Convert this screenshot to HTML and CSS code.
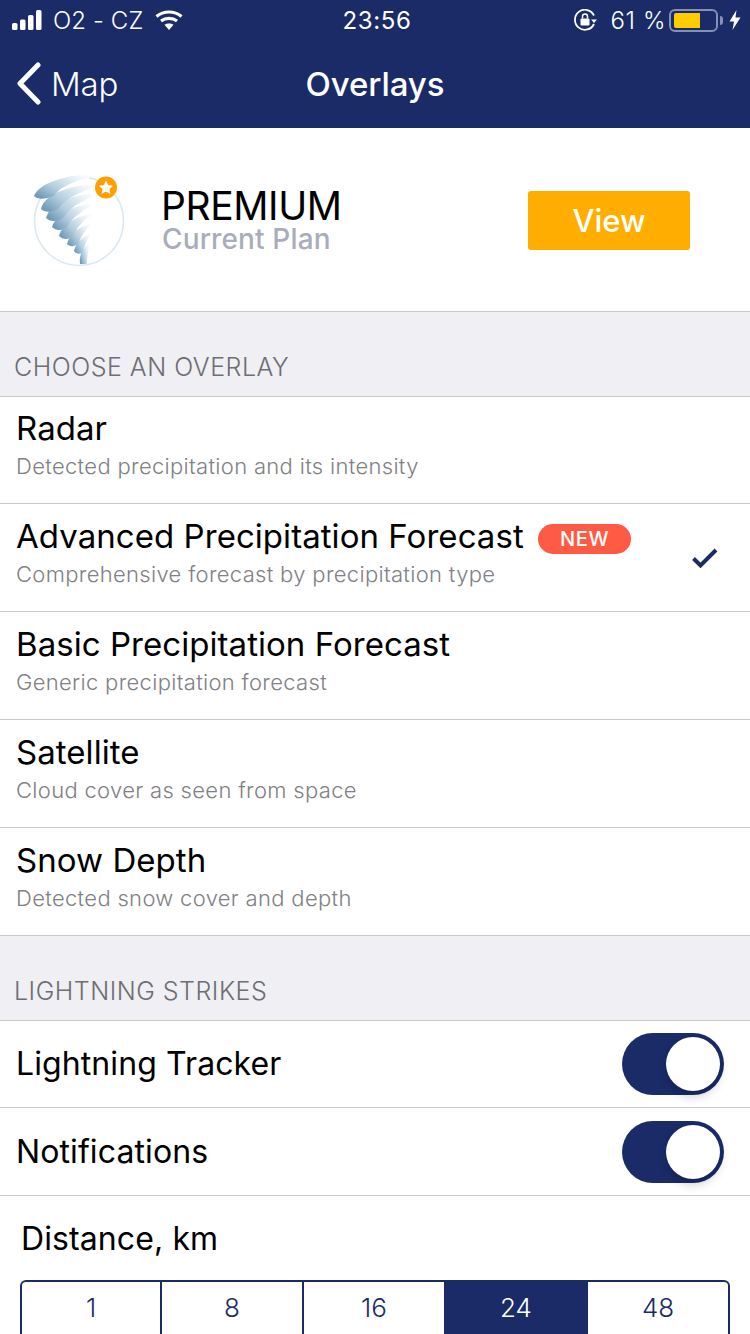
FILE: index.html
```html
<!DOCTYPE html>
<html lang="en">
<head>
<meta charset="utf-8">
<title>Overlays</title>
<link rel="stylesheet" href="styles.css">
</head>
<body>
<div class="app">
  <header class="header">
    <div class="status">
      <div class="status-left">
        <svg class="signal" width="34" height="20" viewBox="0 0 34 20"><g fill="#fff"><rect x="0" y="13" width="5.5" height="7" rx="1.5"/><rect x="8" y="9.500" width="5.500" height="10.500" rx="1.500"/><rect x="16" y="5" width="5.500" height="15" rx="1.500"/><rect x="24" y="0" width="5.500" height="20" rx="1.500"/></g></svg>
        <span class="carrier">O2 - CZ</span>
        <svg class="wifi" width="28" height="20" viewBox="0 0 28 20"><g fill="none" stroke="#fff" stroke-width="3.200"><path d="M1.500 6.500C8.500 0.500 19.500 0.500 26.500 6.500"/><path d="M6 11C10.500 7.500 17.500 7.500 22 11"/></g><path d="M9.500 14.800C12 13 16 13 18.500 14.800L14 20Z" fill="#fff"/></svg>
      </div>
      <span class="time">23:56</span>
      <div class="status-right">
        <svg class="lock" width="24" height="22" viewBox="0 0 24 22"><path d="M20 6.500A10 10 0 1 0 20 15" fill="none" stroke="#fff" stroke-width="1.800"/><path d="M17 10.500h6l-3 3.500z" fill="#fff"/><rect x="6.500" y="9.500" width="9" height="7" rx="1" fill="#fff"/><path d="M8.500 9.500V7.500a2.500 2.500 0 0 1 5 0v2" fill="none" stroke="#fff" stroke-width="1.500"/></svg>
        <span class="pct">61 %</span>
        <div class="battery"><div class="battery-fill"></div></div>
        <div class="battery-nub"></div>
        <svg class="bolt" width="12" height="20" viewBox="0 0 12 20"><path d="M7.500 0L0.500 11.500H5L3.500 20L11.500 7.500H6.500Z" fill="#fff"/></svg>
      </div>
    </div>
    <nav class="nav">
      <div class="back">
        <svg width="28" height="44" viewBox="0 0 28 44"><path d="M23 3L5 21.500L23 40" fill="none" stroke="#fff" stroke-width="5" stroke-linecap="round" stroke-linejoin="round"/></svg>
        <span>Map</span>
      </div>
      <h1 class="title">Overlays</h1>
    </nav>
  </header>

  <section class="plan">
    <div class="logo">
      <svg width="96" height="96" viewBox="0 0 96 96">
        <defs>
          <linearGradient id="sw" x1="0" y1="0.800" x2="1" y2="0.200">
            <stop offset="0" stop-color="#6f9ab8"/>
            <stop offset="0.35" stop-color="#b4cede"/>
            <stop offset="0.75" stop-color="#eaf2f7"/>
            <stop offset="1" stop-color="#ffffff"/>
          </linearGradient>
          <filter id="soft" x="-5%" y="-5%" width="110%" height="110%"><feGaussianBlur stdDeviation="0.450"/></filter>
        </defs>
        <circle cx="48" cy="49" r="44.500" fill="#fff" stroke="#dbe8f1" stroke-width="1.500"/>
        <g transform="translate(1 0)" fill="url(#sw)" filter="url(#soft)">
          <path d="M48 92C47 84 50 76 58 71C56 80 55 86 55 92Z"/>
          <path d="M42 79C44 70 52 64 60 61C55 68 52 74 51 80C48 83 44 82 42 79Z"/>
          <path d="M35 72C38 60 50 53 62 51C54 56 49 64 47 71C43 75 38 75 35 72Z"/>
          <path d="M27 64C31 50 48 43 64 41C54 46 45 54 42 63C38 68 31 68 27 64Z"/>
          <path d="M20 55C25 40 46 32 66 31C54 36 41 44 36 54C31 59 24 59 20 55Z"/>
          <path d="M14 46C19 29 44 22 70 21C56 26 39 33 32 45C26 50 18 50 14 46Z"/>
          <path d="M9 37C13 20 42 12 72 12C56 17 36 24 28 35C20 41 13 41 9 37Z"/>
          <path d="M2 24C8 9 40 1 68 4C52 6 30 12 22 24C14 27 6 28 2 24Z"/>
        </g>
        <circle cx="75" cy="15.500" r="11" fill="#ff9f00"/>
        <path d="M75 8.500l2.100 4.600 5 .6-3.700 3.400 1 5L75 19.600 70.600 22.100l1-5-3.700-3.400 5-.6z" fill="#fff"/>
      </svg>
    </div>
    <div class="plan-text">
      <div class="plan-name">PREMIUM</div>
      <div class="plan-sub">Current Plan</div>
    </div>
    <div class="view">View</div>
  </section>

  <h2 class="section-head">CHOOSE AN OVERLAY</h2>
  <ul class="list">
    <li class="row">
      <div class="row-title">Radar</div>
      <div class="row-sub">Detected precipitation and its intensity</div>
    </li>
    <li class="row">
      <div class="row-title">Advanced Precipitation Forecast <span class="badge">NEW</span></div>
      <div class="row-sub">Comprehensive forecast by precipitation type</div>
      <svg class="check" width="28" height="22" viewBox="0 0 28 22"><path d="M2.500 11.500L9.500 18.500L25 3" fill="none" stroke="#1a2b68" stroke-width="4"/></svg>
    </li>
    <li class="row">
      <div class="row-title">Basic Precipitation Forecast</div>
      <div class="row-sub">Generic precipitation forecast</div>
    </li>
    <li class="row">
      <div class="row-title">Satellite</div>
      <div class="row-sub">Cloud cover as seen from space</div>
    </li>
    <li class="row">
      <div class="row-title">Snow Depth</div>
      <div class="row-sub">Detected snow cover and depth</div>
    </li>
  </ul>

  <h2 class="section-head">LIGHTNING STRIKES</h2>
  <ul class="list">
    <li class="toggle-row"><span class="toggle-label">Lightning Tracker</span><div class="switch"><div class="knob"></div></div></li>
    <li class="toggle-row"><span class="toggle-label">Notifications</span><div class="switch"><div class="knob"></div></div></li>
  </ul>

  <div class="distance">
    <div class="distance-label">Distance, km</div>
    <div class="segments">
      <div class="seg">1</div>
      <div class="seg">8</div>
      <div class="seg seg-plain">16</div>
      <div class="seg active">24</div>
      <div class="seg">48</div>
    </div>
  </div>
</div>
</body>
</html>
```
FILE: styles.css
```css
* { box-sizing: border-box; }
html, body { margin: 0; padding: 0; }
body { width: 750px; height: 1334px; overflow: hidden; background: #fff; font-family: Inter, "Liberation Sans", sans-serif; color: #000; }
.app { display: flex; flex-direction: column; height: 1334px; overflow: hidden; }

.header { background: #1a2b68; color: #fff; height: 128px; flex: none; }
.status { height: 40px; display: grid; grid-template-columns: 1fr auto 1fr; align-items: center; padding: 0 8px 0 12px; font-size: 24px; }
.status-left { display: flex; align-items: center; }
.signal { margin-top: -1px; }
.carrier { margin-left: 7px; letter-spacing: 0.1px; font-weight: 300; }
.wifi { margin-left: 12px; }
.time { font-weight: 400; letter-spacing: 0.6px; margin-left: 0; }
.status-right { display: flex; align-items: center; justify-content: flex-end; }
.lock { margin-right: 12px; }
.pct { font-weight: 300; letter-spacing: 0.6px; margin-right: 3px; }
.battery { width: 49px; height: 23px; border: 2px solid #8490b4; border-radius: 6px; padding: 2px; }
.battery-fill { width: 26px; height: 15px; background: #ffcc00; border-radius: 2px 0 0 2px; margin-left: 1px; }
.battery-nub { width: 3px; height: 9px; background: #8490b4; border-radius: 0 3px 3px 0; margin-left: 2px; }
.bolt { margin-left: 6px; margin-right: 1px; }

.nav { height: 88px; position: relative; display: flex; align-items: center; justify-content: center; }
.back { position: absolute; left: 15px; top: 22px; display: flex; align-items: center; gap: 8px; font-size: 33px; font-weight: 300; letter-spacing: -0.2px; }
.title { margin: 0; font-size: 33px; font-weight: 500; letter-spacing: -0.1px; }

.plan { height: 184px; flex: none; display: flex; align-items: center; padding: 0 60px 0 31px; border-bottom: 1px solid #c9c9cd; }
.logo { width: 96px; height: 96px; margin-right: 34px; }
.plan-text { flex: 1; }
.plan-name { font-size: 39px; line-height: 38px; letter-spacing: -0.4px; margin-top: 0; }
.plan-sub { font-size: 28px; line-height: 28px; color: #a9adbb; font-weight: 500; letter-spacing: 0.15px; margin-top: 0; padding-left: 1px; }
.view { width: 162px; height: 59px; background: #ffae00; color: #fff; border-radius: 3px; display: flex; align-items: center; justify-content: center; font-size: 31px; font-weight: 500; margin-top: 1px; }

.section-head { margin: 0; height: 85px; flex: none; padding: 40px 14px 0; background: #efeff4; font-size: 25px; line-height: 30px; font-weight: 300; color: #6d6d72; border-bottom: 1px solid #c9c9cd; letter-spacing: 0.5px; }
.list { list-style: none; margin: 0; padding: 0; flex: none; }
.row { height: 108px; padding: 13px 16px 0 16px; border-bottom: 1px solid #c9c9cd; position: relative; }
.row:first-child { height: 107px; padding-top: 12px; }
.row-title { font-size: 33px; line-height: 38px; display: flex; align-items: center; letter-spacing: 0.05px; white-space: pre; }
.row-sub { font-size: 22px; line-height: 28px; margin-top: 5px; color: #808085; font-weight: 300; letter-spacing: 0.32px; }
.badge { margin-left: 5px; margin-top: 6px; width: 93px; height: 30px; border-radius: 15px; background: #ff5a43; color: #fff; font-size: 20px; font-weight: 500; display: flex; align-items: center; justify-content: center; letter-spacing: 0.6px; }
.check { position: absolute; left: 691px; top: 43px; }

.toggle-row { height: 87px; display: flex; align-items: center; justify-content: space-between; padding: 0 26px 0 16px; border-bottom: 1px solid #c9c9cd; font-size: 32px; letter-spacing: 0.1px; }
.toggle-row + .toggle-row { height: 88px; }
.toggle-label { margin-top: -2px; }
.toggle-row + .toggle-row .toggle-label { margin-top: 0; }
.switch { width: 102px; height: 62px; background: #1a2b68; border-radius: 31px; position: relative; }
.knob { position: absolute; right: 4px; top: 4px; width: 54px; height: 54px; border-radius: 50%; background: #fff; box-shadow: 0 6px 10px rgba(0,0,0,0.18); }

.distance { padding: 0 20px; }
.distance-label { font-size: 32px; line-height: 38px; margin-top: 24px; padding-left: 1px; letter-spacing: 0.1px; }
.segments { display: grid; grid-template-columns: 140px 142px 140px 144px 1fr; height: 80px; margin-top: 22px; border: 2px solid #1a2b68; border-radius: 6px; width: 710px; overflow: hidden; }
.seg { display: flex; align-items: flex-start; justify-content: center; padding-top: 10px; font-size: 26px; line-height: 32px; color: #1a2b68; font-weight: 300; border-right: 2px solid #1a2b68; }
.seg:last-child, .seg-plain { border-right: 0; }
.seg.active { background: #1a2b68; color: #fff; border-right: 0; }
```
